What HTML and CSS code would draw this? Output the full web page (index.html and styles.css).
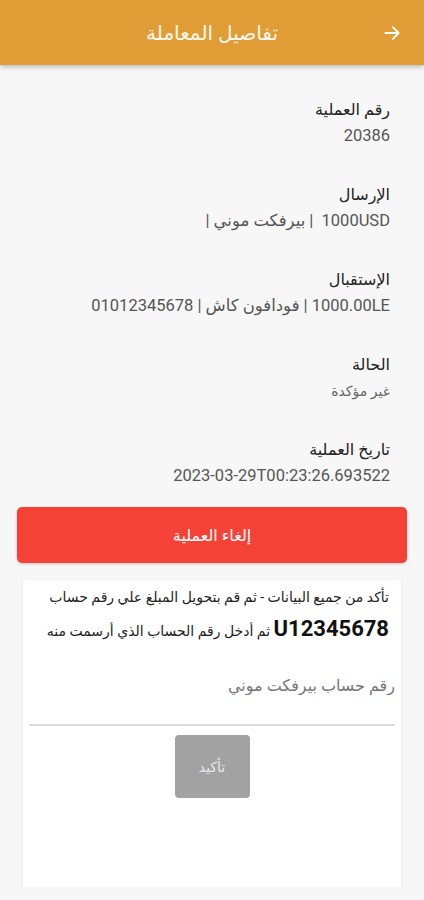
FILE: index.html
```html
<!DOCTYPE html>
<html lang="ar" dir="rtl">
<head>
    <meta charset="UTF-8">
    <meta name="viewport" content="width=device-width, initial-scale=1.0">
    <title>تفاصيل المعاملة</title>
    <link rel="stylesheet" href="styles.css">
</head>
<body>

<div class="appbar">
    <button class="back" aria-label="back">
        <svg width="20" height="20" viewBox="0 0 24 24"><path d="M4 12h15M13 5l7 7-7 7" fill="none" stroke="#fff" stroke-width="2.2" stroke-linecap="round" stroke-linejoin="round"/></svg>
    </button>
    <h1>تفاصيل المعاملة</h1>
</div>

<div class="details">
    <div class="item">
        <div class="label">رقم العملية</div>
        <div class="value">20386</div>
    </div>
    <div class="item">
        <div class="label">الإرسال</div>
        <div class="value">1000USD &nbsp;| بيرفكت موني |</div>
    </div>
    <div class="item">
        <div class="label">الإستقبال</div>
        <div class="value">1000.00LE | فودافون كاش | 01012345678</div>
    </div>
    <div class="item">
        <div class="label">الحالة</div>
        <div class="value small">غير مؤكدة</div>
    </div>
    <div class="item">
        <div class="label">تاريخ العملية</div>
        <div class="value">2023-03-29T00:23:26.693522</div>
    </div>
</div>

<button class="cancel">إلغاء العملية</button>

<div class="card">
    <p class="note">تأكد من جميع البيانات - ثم قم بتحويل المبلغ علي رقم حساب <b>U12345678</b> ثم أدخل رقم الحساب الذي أرسمت منه</p>
    <input class="account" type="text" placeholder="رقم حساب بيرفكت موني">
    <div class="actions">
        <button class="confirm" disabled>تأكيد</button>
    </div>
</div>

</body>
</html>
```

FILE: styles.css
```css
body {
    margin: 0;
    background-color: #f7f7f7;
    font-family: Roboto, "DejaVu Sans", sans-serif;
    direction: rtl;
}

.appbar {
    height: 65px;
    background-color: #e09d36;
    display: flex;
    align-items: center;
    justify-content: center;
    position: relative;
    box-shadow: 0 2px 5px rgba(0,0,0,0.25);
}

.appbar h1 {
    margin: 0;
    color: #fdf8ee;
    font-size: 20px;
    font-weight: normal;
}

.back {
    position: absolute;
    right: 22px;
    top: 23px;
    background: none;
    border: none;
    padding: 0;
    display: flex;
}

.details {
    padding: 32px 34px 0 20px;
}

.item {
    margin-bottom: 33px;
}

.item:last-child {
    margin-bottom: 0;
}

.label {
    color: #222;
    font-size: 16px;
    line-height: 26px;
}

.value {
    color: #555;
    font-size: 16.5px;
    line-height: 26px;
}

.value.small {
    font-size: 14px;
    color: #666;
}

.cancel {
    display: block;
    width: 390px;
    height: 56px;
    margin: 18px 17px 0 17px;
    background-color: #f44336;
    color: #fff;
    border: none;
    border-radius: 5px;
    font-family: inherit;
    font-size: 16px;
    box-shadow: 0 1px 3px rgba(0,0,0,0.2);
}

.card {
    margin: 17px 23px 0 23px;
    height: 307px;
    background-color: #fff;
    box-shadow: 0 1px 3px rgba(0,0,0,0.08);
    padding: 2px 6px 0 6px;
    box-sizing: border-box;
}

.note {
    margin: 0;
    padding: 0 6px 0 2px;
    color: #222;
    font-size: 14px;
    line-height: 31px;
}

.note b {
    font-size: 22px;
    color: #111;
}

.account {
    display: block;
    width: 100%;
    box-sizing: border-box;
    margin-top: 21px;
    border: none;
    border-bottom: 2px solid #ddd;
    padding: 8px 0 29px 0;
    font-family: inherit;
    font-size: 16px;
    background: none;
    direction: rtl;
}

.account::placeholder {
    color: #777;
}

.actions {
    display: flex;
    justify-content: center;
    padding-top: 9px;
}

.confirm {
    width: 75px;
    height: 63px;
    background-color: #a2a2a2;
    color: #e8e8e8;
    border: none;
    border-radius: 4px;
    font-family: inherit;
    font-size: 14px;
}
```
